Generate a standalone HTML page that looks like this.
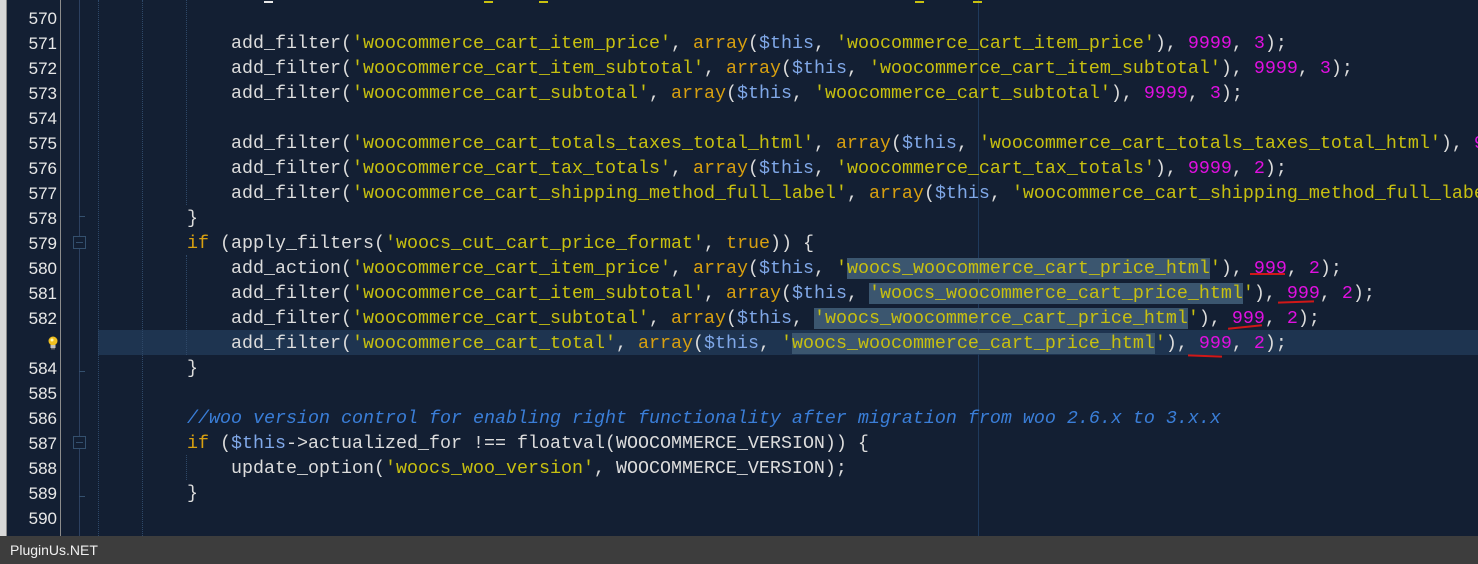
<!DOCTYPE html>
<html><head><meta charset="utf-8"><style>
html,body{margin:0;padding:0;width:1478px;height:564px;overflow:hidden;background:#131f33;}
#ed{position:absolute;left:0;top:0;width:1478px;height:536px;background:#131f33;overflow:hidden;}
.strip{position:absolute;left:0;top:0;width:6px;height:536px;background:#d8d8d8;}
.strip2{position:absolute;left:6px;top:0;width:1px;height:536px;background:#8a8a8a;}
.gb{position:absolute;left:60px;top:0;width:1px;height:536px;background:#8c8c8c;}
.fold{position:absolute;left:79px;top:0;width:1px;height:536px;background:#2c4060;}
.guide{position:absolute;top:0;width:0;height:536px;border-left:1px dotted #2e4868;}
.margin{position:absolute;left:978px;top:0;width:1px;height:536px;background:#1f3a5c;}
.cur{position:absolute;left:98px;top:330px;width:1380px;height:25px;background:#1e3450;}
.row{position:absolute;left:99px;height:25px;line-height:25px;white-space:pre;font-family:"Liberation Mono",monospace;font-size:18.33px;color:#dcdcdc;}
.ln{position:absolute;left:0;width:57px;text-align:right;height:25px;line-height:25px;font-family:"Liberation Sans",sans-serif;font-size:17px;color:#e8e8e8;}
.s{color:#c8c010}.n{color:#e010e0}.k{color:#d8a010}.v{color:#80a8e8}.c{color:#3a7ed8;font-style:italic}
.sel{background:#3b566f}
.bx{position:absolute;left:73px;width:11px;height:11px;border:1px solid #34506e;background:#131f33;}
.bx:after{content:"";position:absolute;left:2px;top:5px;width:7px;height:1px;background:#34506e;}
.tk{position:absolute;left:79px;width:6px;height:1px;background:#34506e;}
.ul{position:absolute;height:2px;background:#d01818;}
#sb{position:absolute;left:0;top:536px;width:1478px;height:28px;background:#3d3d3d;color:#f0f0f0;font-family:"Liberation Sans",sans-serif;font-size:14px;line-height:28px;padding-left:10px;}
</style></head><body>
<div id="ed">
<div class="cur"></div>
<div class="strip"></div><div class="strip2"></div>
<div class="gb"></div><div class="fold"></div>
<div class="guide" style="left:98px"></div>
<div class="guide" style="left:142px"></div>
<div class="guide" style="left:186px;top:255px;height:100px"></div>
<div class="guide" style="left:186px;top:455px;height:25px"></div>
<div class="guide" style="left:186px;top:0;height:205px"></div>
<div class="margin"></div>

<div class="bx" style="top:236px"></div>
<div class="bx" style="top:436px"></div>
<div class="tk" style="top:216px"></div>
<div class="tk" style="top:371px"></div>
<div class="tk" style="top:496px"></div>

<div style="position:absolute;left:264px;top:1px;width:9px;height:2px;background:#e8e8e8"></div>
<div style="position:absolute;left:484px;top:1px;width:9px;height:2px;background:#c8c010"></div>
<div style="position:absolute;left:539px;top:1px;width:9px;height:2px;background:#c8c010"></div>
<div style="position:absolute;left:915px;top:1px;width:9px;height:2px;background:#c8c010"></div>
<div style="position:absolute;left:973px;top:1px;width:9px;height:2px;background:#c8c010"></div>

<div class="ln" style="top:6px">570</div>
<div class="ln" style="top:31px">571</div>
<div class="ln" style="top:56px">572</div>
<div class="ln" style="top:81px">573</div>
<div class="ln" style="top:106px">574</div>
<div class="ln" style="top:131px">575</div>
<div class="ln" style="top:156px">576</div>
<div class="ln" style="top:181px">577</div>
<div class="ln" style="top:206px">578</div>
<div class="ln" style="top:231px">579</div>
<div class="ln" style="top:256px">580</div>
<div class="ln" style="top:281px">581</div>
<div class="ln" style="top:306px">582</div>
<svg style="position:absolute;left:47px;top:335px" width="12" height="16" viewBox="0 0 12 16"><circle cx="6" cy="6" r="4.5" fill="#f0c020"/><circle cx="5" cy="5" r="1.5" fill="#fff6b0"/><rect x="3.5" y="10" width="5" height="3" fill="#c0c0c0"/><rect x="4" y="13" width="4" height="1.5" fill="#606060"/></svg>
<div class="ln" style="top:356px">584</div>
<div class="ln" style="top:381px">585</div>
<div class="ln" style="top:406px">586</div>
<div class="ln" style="top:431px">587</div>
<div class="ln" style="top:456px">588</div>
<div class="ln" style="top:481px">589</div>
<div class="ln" style="top:506px">590</div>

<div class="row" style="top:31px">            add_filter(<span class="s">'woocommerce_cart_item_price'</span>, <span class="k">array</span>(<span class="v">$this</span>, <span class="s">'woocommerce_cart_item_price'</span>), <span class="n">9999</span>, <span class="n">3</span>);</div>
<div class="row" style="top:56px">            add_filter(<span class="s">'woocommerce_cart_item_subtotal'</span>, <span class="k">array</span>(<span class="v">$this</span>, <span class="s">'woocommerce_cart_item_subtotal'</span>), <span class="n">9999</span>, <span class="n">3</span>);</div>
<div class="row" style="top:81px">            add_filter(<span class="s">'woocommerce_cart_subtotal'</span>, <span class="k">array</span>(<span class="v">$this</span>, <span class="s">'woocommerce_cart_subtotal'</span>), <span class="n">9999</span>, <span class="n">3</span>);</div>
<div class="row" style="top:131px">            add_filter(<span class="s">'woocommerce_cart_totals_taxes_total_html'</span>, <span class="k">array</span>(<span class="v">$this</span>, <span class="s">'woocommerce_cart_totals_taxes_total_html'</span>), <span class="n">9999</span>, <span class="n">2</span>);</div>
<div class="row" style="top:156px">            add_filter(<span class="s">'woocommerce_cart_tax_totals'</span>, <span class="k">array</span>(<span class="v">$this</span>, <span class="s">'woocommerce_cart_tax_totals'</span>), <span class="n">9999</span>, <span class="n">2</span>);</div>
<div class="row" style="top:181px">            add_filter(<span class="s">'woocommerce_cart_shipping_method_full_label'</span>, <span class="k">array</span>(<span class="v">$this</span>, <span class="s">'woocommerce_cart_shipping_method_full_label'</span>), <span class="n">9999</span>, <span class="n">2</span>);</div>
<div class="row" style="top:206px">        }</div>
<div class="row" style="top:231px">        <span class="k">if</span> (apply_filters(<span class="s">'woocs_cut_cart_price_format'</span>, <span class="k">true</span>)) {</div>
<div class="row" style="top:256px">            add_action(<span class="s">'woocommerce_cart_item_price'</span>, <span class="k">array</span>(<span class="v">$this</span>, <span class="s">'<span class="sel">woocs_woocommerce_cart_price_html</span>'</span>), <span class="n">999</span>, <span class="n">2</span>);</div>
<div class="row" style="top:281px">            add_filter(<span class="s">'woocommerce_cart_item_subtotal'</span>, <span class="k">array</span>(<span class="v">$this</span>, <span class="s"><span class="sel">'woocs_woocommerce_cart_price_html</span>'</span>), <span class="n">999</span>, <span class="n">2</span>);</div>
<div class="row" style="top:306px">            add_filter(<span class="s">'woocommerce_cart_subtotal'</span>, <span class="k">array</span>(<span class="v">$this</span>, <span class="s"><span class="sel">'woocs_woocommerce_cart_price_html</span>'</span>), <span class="n">999</span>, <span class="n">2</span>);</div>
<div class="row" style="top:331px">            add_filter(<span class="s">'woocommerce_cart_total'</span>, <span class="k">array</span>(<span class="v">$this</span>, <span class="s">'<span class="sel">woocs_woocommerce_cart_price_html</span>'</span>), <span class="n">999</span>, <span class="n">2</span>);</div>
<div class="row" style="top:356px">        }</div>
<div class="row" style="top:406px">        <span class="c">//woo version control for enabling right functionality after migration from woo 2.6.x to 3.x.x</span></div>
<div class="row" style="top:431px">        <span class="k">if</span> (<span class="v">$this</span>-&gt;actualized_for !== floatval(WOOCOMMERCE_VERSION)) {</div>
<div class="row" style="top:456px">            update_option(<span class="s">'woocs_woo_version'</span>, WOOCOMMERCE_VERSION);</div>
<div class="row" style="top:481px">        }</div>

<div class="ul" style="left:1250px;top:273px;width:35px"></div>
<div class="ul" style="left:1278px;top:301px;width:36px;transform:rotate(-2deg)"></div>
<div class="ul" style="left:1228px;top:326px;width:34px;transform:rotate(-6deg)"></div>
<div class="ul" style="left:1188px;top:355px;width:34px;transform:rotate(2deg)"></div>
</div>
<div id="sb">PluginUs.NET</div>
</body></html>
